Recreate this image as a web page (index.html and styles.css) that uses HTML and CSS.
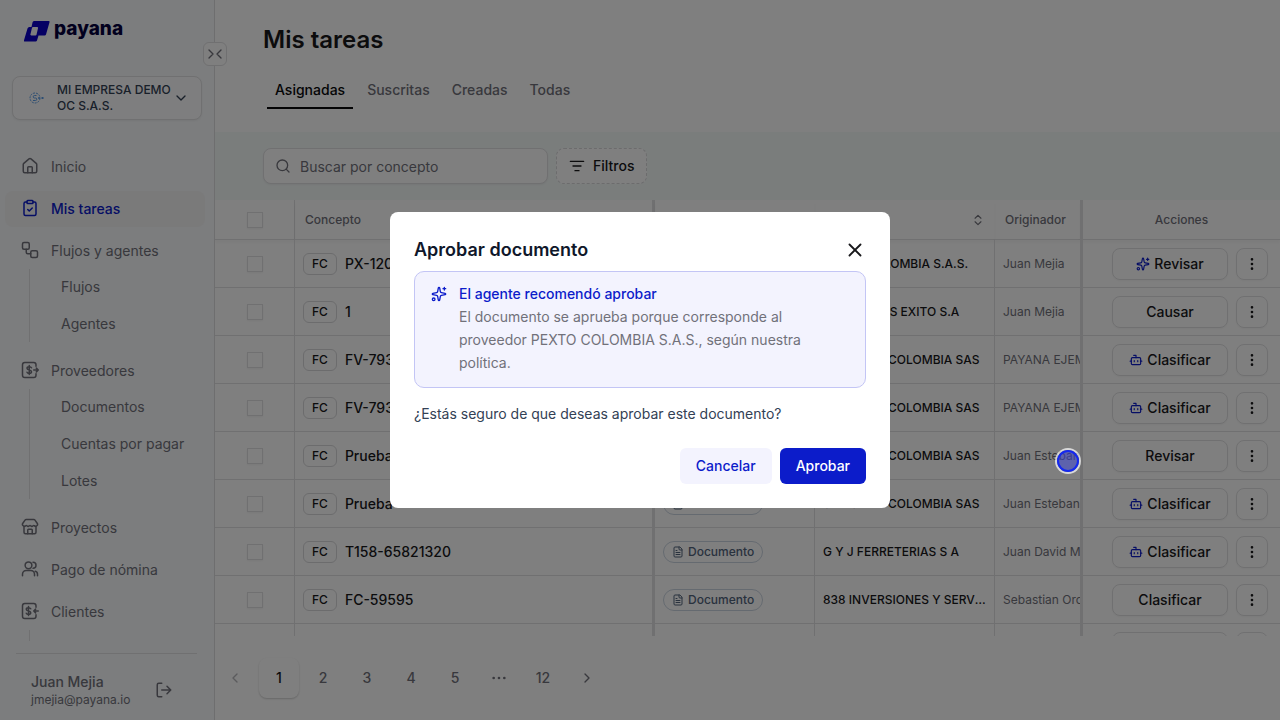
FILE: index.html
```html
<!DOCTYPE html>
<html lang="es">
<head>
  <meta charset="UTF-8" />
  <meta name="viewport" content="width=device-width, initial-scale=1.0" />
  <title>Mis tareas - Payana</title>
  <link rel="stylesheet" href="styles.css">
</head>
<body>

<!-- ===== Icons ===== -->
<svg class="sprite" aria-hidden="true">
  <symbol id="i-home" viewBox="0 0 24 24"><path d="M15 21v-7a1 1 0 0 0-1-1h-4a1 1 0 0 0-1 1v7"/><path d="M3 10a2 2 0 0 1 .7-1.5l7-6a2 2 0 0 1 2.6 0l7 6A2 2 0 0 1 21 10v9a2 2 0 0 1-2 2H5a2 2 0 0 1-2-2z"/></symbol>
  <symbol id="i-tasks" viewBox="0 0 24 24"><rect x="8" y="2" width="8" height="4" rx="1"/><path d="M16 4h2a2 2 0 0 1 2 2v14a2 2 0 0 1-2 2H6a2 2 0 0 1-2-2V6a2 2 0 0 1 2-2h2"/><path d="m9 14 2 2 4-4"/></symbol>
  <symbol id="i-flow" viewBox="0 0 24 24"><rect x="2" y="2" width="9" height="9" rx="2"/><path d="M7 11v4a2 2 0 0 0 2 2h4"/><rect x="13" y="13" width="9" height="9" rx="2"/></symbol>
  <symbol id="i-pay-out" viewBox="0 0 24 24"><path d="M20 7V5a3 3 0 0 0-3-3H5a3 3 0 0 0-3 3v14a3 3 0 0 0 3 3h12a3 3 0 0 0 3-3v-2"/><path d="M14 9c-.5-1-1.500-1.500-3-1.500-1.800 0-3 .8-3 2.200 0 3.200 6 1.400 6 4.600 0 1.400-1.200 2.200-3 2.200-1.500 0-2.500-.5-3-1.500M11 6v12"/><path d="M17 12h6M20.500 9.500 23 12l-2.500 2.500"/></symbol>
  <symbol id="i-pay-in" viewBox="0 0 24 24"><path d="M20 7V5a3 3 0 0 0-3-3H5a3 3 0 0 0-3 3v14a3 3 0 0 0 3 3h12a3 3 0 0 0 3-3v-2"/><path d="M13 9c-.5-1-1.500-1.500-3-1.500-1.800 0-3 .8-3 2.200 0 3.200 6 1.400 6 4.600 0 1.400-1.200 2.200-3 2.200-1.500 0-2.500-.5-3-1.500M10 6v12"/><path d="M23 12h-6M19.500 9.500 17 12l2.500 2.500"/></symbol>
  <symbol id="i-store" viewBox="0 0 24 24"><path d="M15 21v-5a1 1 0 0 0-1-1h-4a1 1 0 0 0-1 1v5"/><path d="M17.774 10.310a1.120 1.120 0 0 0-1.549 0 2.500 2.500 0 0 1-3.451 0 1.120 1.120 0 0 0-1.548 0 2.500 2.500 0 0 1-3.452 0 1.120 1.120 0 0 0-1.549 0 2.500 2.500 0 0 1-3.770-3.248l2.889-4.184A2 2 0 0 1 7 2h10a2 2 0 0 1 1.653.873l2.895 4.192a2.500 2.500 0 0 1-3.774 3.244"/><path d="M4 10.950V19a2 2 0 0 0 2 2h12a2 2 0 0 0 2-2v-8.050"/></symbol>
  <symbol id="i-users" viewBox="0 0 24 24"><circle cx="10" cy="7" r="4.500"/><path d="M2 21v-2a5 5 0 0 1 5-5h6a5 5 0 0 1 5 5v2M16 3a4 4 0 0 1 0 8M22 21v-2a4 4 0 0 0-3-3.870"/></symbol>
  <symbol id="i-logout" viewBox="0 0 24 24"><path d="m16 17 5-5-5-5M21 12H9M9 21H5a2 2 0 0 1-2-2V5a2 2 0 0 1 2-2h4"/></symbol>
  <symbol id="i-down" viewBox="0 0 24 24"><path d="m6 9 6 6 6-6"/></symbol>
  <symbol id="i-left" viewBox="0 0 24 24"><path d="m15 18-6-6 6-6"/></symbol>
  <symbol id="i-right" viewBox="0 0 24 24"><path d="m9 18 6-6-6-6"/></symbol>
  <symbol id="i-sort" viewBox="0 0 24 24"><path d="m7 15 5 5 5-5M7 9l5-5 5 5"/></symbol>
  <symbol id="i-collapse" viewBox="0 0 24 24"><path d="m3 18 6-6-6-6M21 6l-6 6 6 6"/></symbol>
  <symbol id="i-search" viewBox="0 0 24 24"><circle cx="11" cy="11" r="8"/><path d="m21 21-4.300-4.300"/></symbol>
  <symbol id="i-filter" viewBox="0 0 24 24"><path d="M2 5h20M6 12h12M9 19h6"/></symbol>
  <symbol id="i-doc" viewBox="0 0 24 24"><path d="M15 2H6a2 2 0 0 0-2 2v16a2 2 0 0 0 2 2h12a2 2 0 0 0 2-2V7z"/><path d="M14 2v4a2 2 0 0 0 2 2h4M10 9H8M16 13H8M16 17H8"/></symbol>
  <symbol id="i-bot" viewBox="0 0 24 24"><path d="M12 8V4H8"/><rect x="4" y="8" width="16" height="12" rx="2"/><path d="M2 14h2M20 14h2M15 13v2M9 13v2"/></symbol>
  <symbol id="i-spark" viewBox="0 0 24 24"><path d="M11.017 2.814a1 1 0 0 1 1.966 0l1.051 5.558a2 2 0 0 0 1.594 1.594l5.558 1.051a1 1 0 0 1 0 1.966l-5.558 1.051a2 2 0 0 0-1.594 1.594l-1.051 5.558a1 1 0 0 1-1.966 0l-1.051-5.558a2 2 0 0 0-1.594-1.594l-5.558-1.051a1 1 0 0 1 0-1.966l5.558-1.051a2 2 0 0 0 1.594-1.594z"/><path d="M20 2v4M22 4h-4"/><circle cx="4" cy="20" r="2"/></symbol>
  <symbol id="i-more" viewBox="0 0 24 24"><circle cx="12" cy="5" r="1"/><circle cx="12" cy="12" r="1"/><circle cx="12" cy="19" r="1"/></symbol>
  <symbol id="i-dots" viewBox="0 0 24 24"><circle cx="4" cy="12" r="1"/><circle cx="12" cy="12" r="1"/><circle cx="20" cy="12" r="1"/></symbol>
  <symbol id="i-close" viewBox="0 0 24 24"><path d="M18 6 6 18M6 6l12 12"/></symbol>
</svg>

<div class="app">

  <!-- ===== Sidebar ===== -->
  <aside class="sidebar">
    <a class="brand" href="#">
      <svg class="brand-mark" viewBox="0 0 26 21" aria-hidden="true">
        <path fill="#0a00c8" fill-rule="evenodd" d="M10 0H24.500a1 1 0 0 1 1 1.300L22 13.500a1.500 1.500 0 0 1-1.500 1H14.500L13 19.500a1.500 1.500 0 0 1-1.500 1H1a1 1 0 0 1-1-1.300L3.500 7.500A2 2 0 0 1 5.500 6H7.500L8.500 1.500A2 2 0 0 1 10 0zM9 6a1 1 0 0 0-1 .7L6.500 13a1 1 0 0 0 1 1.500H11.500a1 1 0 0 0 1-.8L14 7.300A1 1 0 0 0 13 6z"/>
      </svg>
      <span>payana</span>
    </a>
    <button class="collapse" aria-label="Contraer menú"><svg class="icon"><use href="#i-collapse"/></svg></button>

    <button class="company">
      <svg class="company-logo" viewBox="0 0 16 12" aria-hidden="true">
        <circle cx="6" cy="6" r="5" stroke-dasharray="2 1"/><path d="M7.500 3.500H5.500a1.200 1.200 0 0 0 0 2.500h1a1.200 1.200 0 0 1 0 2.500H4M9 6h2M12 6h3M10 5v2M13.500 5v2"/>
      </svg>
      <span>MI EMPRESA DEMO OC S.A.S.</span>
      <svg class="icon"><use href="#i-down"/></svg>
    </button>

    <nav class="nav">
      <a class="nav-link" href="#"><svg class="icon"><use href="#i-home"/></svg>Inicio</a>
      <a class="nav-link active" href="#"><svg class="icon"><use href="#i-tasks"/></svg>Mis tareas</a>
      <div class="nav-group">
        <a class="nav-link" href="#"><svg class="icon"><use href="#i-flow"/></svg>Flujos y agentes</a>
        <div class="subnav">
          <a href="#">Flujos</a>
          <a href="#">Agentes</a>
        </div>
      </div>
      <div class="nav-group">
        <a class="nav-link" href="#"><svg class="icon"><use href="#i-pay-out"/></svg>Proveedores</a>
        <div class="subnav">
          <a href="#">Documentos</a>
          <a href="#">Cuentas por pagar</a>
          <a href="#">Lotes</a>
        </div>
      </div>
      <a class="nav-link" href="#"><svg class="icon"><use href="#i-store"/></svg>Proyectos</a>
      <a class="nav-link" href="#"><svg class="icon"><use href="#i-users"/></svg>Pago de nómina</a>
      <div class="nav-group">
        <a class="nav-link" href="#"><svg class="icon"><use href="#i-pay-in"/></svg>Clientes</a>
        <div class="subnav"><a href="#"></a></div>
      </div>
    </nav>

    <div class="user">
      <div>
        <div class="user-name">Juan Mejia</div>
        <div class="user-mail">jmejia@payana.io</div>
      </div>
      <button class="logout" aria-label="Cerrar sesión"><svg class="icon"><use href="#i-logout"/></svg></button>
    </div>
  </aside>

  <!-- ===== Main ===== -->
  <main class="main">
    <header class="page-head">
      <h1>Mis tareas</h1>
      <div class="tabs">
        <button class="tab active">Asignadas</button>
        <button class="tab">Suscritas</button>
        <button class="tab">Creadas</button>
        <button class="tab">Todas</button>
      </div>
    </header>

    <div class="toolbar">
      <label class="search">
        <svg class="icon"><use href="#i-search"/></svg>
        <input type="text" placeholder="Buscar por concepto" aria-label="Buscar por concepto">
      </label>
      <button class="filters"><svg class="icon"><use href="#i-filter"/></svg>Filtros</button>
    </div>

    <div class="table-wrap">
      <table>
        <colgroup><col class="c-check"><col class="c-concept"><col class="c-type"><col class="c-vendor"><col><col class="c-actions"></colgroup>
        <thead>
          <tr>
            <th class="check"><input type="checkbox" aria-label="Seleccionar todo"></th>
            <th class="concept">Concepto</th>
            <th>Tipo</th>
            <th><div class="sortable">Proveedor<svg class="icon"><use href="#i-sort"/></svg></div></th>
            <th>Originador</th>
            <th class="actions">Acciones</th>
          </tr>
        </thead>
        <tbody>
          <tr>
            <td class="check"><input type="checkbox" aria-label="Seleccionar PX-1203"></td>
            <td class="concept"><div class="doc"><span class="tag">FC</span>PX-1203</div></td>
            <td><span class="pill"><svg class="icon"><use href="#i-doc"/></svg>Documento</span></td>
            <td class="vendor">PEXTO COLOMBIA S.A.S.</td>
            <td class="owner">Juan Mejia</td>
            <td class="actions"><div class="action-row"><button class="act"><svg class="icon"><use href="#i-spark"/></svg>Revisar</button><button class="more" aria-label="Más"><svg class="icon"><use href="#i-more"/></svg></button></div></td>
          </tr>
          <tr>
            <td class="check"><input type="checkbox" aria-label="Seleccionar 1"></td>
            <td class="concept"><div class="doc"><span class="tag">FC</span>1</div></td>
            <td><span class="pill"><svg class="icon"><use href="#i-doc"/></svg>Documento</span></td>
            <td class="vendor">ALMACENES EXITO S.A</td>
            <td class="owner">Juan Mejia</td>
            <td class="actions"><div class="action-row"><button class="act">Causar</button><button class="more" aria-label="Más"><svg class="icon"><use href="#i-more"/></svg></button></div></td>
          </tr>
          <tr>
            <td class="check"><input type="checkbox" aria-label="Seleccionar FV-793"></td>
            <td class="concept"><div class="doc"><span class="tag">FC</span>FV-793</div></td>
            <td><span class="pill"><svg class="icon"><use href="#i-doc"/></svg>Documento</span></td>
            <td class="vendor">SAMSUNG COLOMBIA SAS</td>
            <td class="owner">PAYANA EJEMPLO</td>
            <td class="actions"><div class="action-row"><button class="act"><svg class="icon"><use href="#i-bot"/></svg>Clasificar</button><button class="more" aria-label="Más"><svg class="icon"><use href="#i-more"/></svg></button></div></td>
          </tr>
          <tr>
            <td class="check"><input type="checkbox" aria-label="Seleccionar FV-793"></td>
            <td class="concept"><div class="doc"><span class="tag">FC</span>FV-793</div></td>
            <td><span class="pill"><svg class="icon"><use href="#i-doc"/></svg>Documento</span></td>
            <td class="vendor">SAMSUNG COLOMBIA SAS</td>
            <td class="owner">PAYANA EJEMPLO</td>
            <td class="actions"><div class="action-row"><button class="act"><svg class="icon"><use href="#i-bot"/></svg>Clasificar</button><button class="more" aria-label="Más"><svg class="icon"><use href="#i-more"/></svg></button></div></td>
          </tr>
          <tr>
            <td class="check"><input type="checkbox" aria-label="Seleccionar Prueba"></td>
            <td class="concept"><div class="doc"><span class="tag">FC</span>Prueba</div></td>
            <td><span class="pill"><svg class="icon"><use href="#i-doc"/></svg>Documento</span></td>
            <td class="vendor">SAMSUNG COLOMBIA SAS</td>
            <td class="owner">Juan Esteban</td>
            <td class="actions"><div class="action-row"><button class="act">Revisar</button><button class="more" aria-label="Más"><svg class="icon"><use href="#i-more"/></svg></button></div></td>
          </tr>
          <tr>
            <td class="check"><input type="checkbox" aria-label="Seleccionar Prueba"></td>
            <td class="concept"><div class="doc"><span class="tag">FC</span>Prueba</div></td>
            <td><span class="pill"><svg class="icon"><use href="#i-doc"/></svg>Documento</span></td>
            <td class="vendor">SAMSUNG COLOMBIA SAS</td>
            <td class="owner">Juan Esteban</td>
            <td class="actions"><div class="action-row"><button class="act"><svg class="icon"><use href="#i-bot"/></svg>Clasificar</button><button class="more" aria-label="Más"><svg class="icon"><use href="#i-more"/></svg></button></div></td>
          </tr>
          <tr>
            <td class="check"><input type="checkbox" aria-label="Seleccionar T158-65821320"></td>
            <td class="concept"><div class="doc"><span class="tag">FC</span>T158-65821320</div></td>
            <td><span class="pill"><svg class="icon"><use href="#i-doc"/></svg>Documento</span></td>
            <td class="vendor">G Y J FERRETERIAS S A</td>
            <td class="owner">Juan David Mejia</td>
            <td class="actions"><div class="action-row"><button class="act"><svg class="icon"><use href="#i-bot"/></svg>Clasificar</button><button class="more" aria-label="Más"><svg class="icon"><use href="#i-more"/></svg></button></div></td>
          </tr>
          <tr>
            <td class="check"><input type="checkbox" aria-label="Seleccionar FC-59595"></td>
            <td class="concept"><div class="doc"><span class="tag">FC</span>FC-59595</div></td>
            <td><span class="pill"><svg class="icon"><use href="#i-doc"/></svg>Documento</span></td>
            <td class="vendor">838 INVERSIONES Y SERVICIOS SAS</td>
            <td class="owner">Sebastian Orozco</td>
            <td class="actions"><div class="action-row"><button class="act">Clasificar</button><button class="more" aria-label="Más"><svg class="icon"><use href="#i-more"/></svg></button></div></td>
          </tr>
          <tr>
            <td class="check"></td>
            <td class="concept"></td>
            <td></td>
            <td class="vendor"></td>
            <td class="owner"></td>
            <td class="actions"><div class="action-row"><button class="act">Clasificar</button><button class="more" aria-label="Más"><svg class="icon"><use href="#i-more"/></svg></button></div></td>
          </tr>
        </tbody>
      </table>
    </div>

    <nav class="pages" aria-label="Paginación">
      <button class="prev" aria-label="Anterior"><svg class="icon"><use href="#i-left"/></svg></button>
      <button class="current">1</button>
      <button>2</button>
      <button>3</button>
      <button>4</button>
      <button>5</button>
      <button aria-label="Más páginas"><svg class="icon"><use href="#i-dots"/></svg></button>
      <button>12</button>
      <button aria-label="Siguiente"><svg class="icon"><use href="#i-right"/></svg></button>
    </nav>
  </main>
</div>

<!-- ===== Approve modal ===== -->
<div class="overlay">
  <div class="modal" role="dialog" aria-modal="true" aria-labelledby="modalTitle">
    <div class="modal-head">
      <h2 id="modalTitle">Aprobar documento</h2>
      <button class="close" aria-label="Cerrar"><svg class="icon"><use href="#i-close"/></svg></button>
    </div>
    <div class="advice">
      <svg class="icon"><use href="#i-spark"/></svg>
      <div>
        <h3>El agente recomendó aprobar</h3>
        <p>El documento se aprueba porque corresponde al proveedor PEXTO COLOMBIA S.A.S., según nuestra política.</p>
      </div>
    </div>
    <p class="question">¿Estás seguro de que deseas aprobar este documento?</p>
    <div class="modal-actions">
      <button class="btn cancel">Cancelar</button>
      <button class="btn approve">Aprobar</button>
    </div>
  </div>
</div>

<div class="pointer"></div>

</body>
</html>
```
FILE: styles.css
```css
:root { --blue:#0c1cca; --line:#e0e0e2; --muted:#71717a; --ink:#18181b; }
* { box-sizing:border-box; margin:0; padding:0; }
body { font-family:Inter,"Liberation Sans",sans-serif; font-size:14px; line-height:20px; color:var(--ink); background:#fff; overflow:hidden; }
button,input { font:inherit; color:inherit; }
button { background:none; border:none; cursor:pointer; }
a { color:inherit; text-decoration:none; }

.sprite{display:none;}
.icon{
  width:16px;height:16px;flex:none;fill:none;stroke:currentColor;
  stroke-width:2;stroke-linecap:round;stroke-linejoin:round;
}

.app{display:flex;height:100vh;}

/* ===== Sidebar ===== */
.sidebar{
  position:relative;width:215px;flex:none;display:flex;flex-direction:column;
  background:#f8fafc;border-right:1px solid #dcdcde;
}
.brand{
  display:flex;align-items:center;gap:4px;height:42px;margin-bottom:34px;padding:20px 0 0 24px;
  font-size:19px;line-height:20px;font-weight:800;color:#05003c;
}
.brand-mark{width:26px;height:21px;}
.brand span{padding-bottom:4px;}
.collapse{
  position:absolute;top:42px;right:-13px;width:24px;height:24px;z-index:2;
  display:flex;align-items:center;justify-content:center;
  background:#fff;border:1px solid var(--line);border-radius:6px;color:var(--muted);
}
.company{
  display:flex;align-items:center;min-height:44px;margin:0 12px 29px;padding:0 12px 0 16px;
  background:#fdfdfe;border:1px solid var(--line);border-radius:8px;
  box-shadow:0 1px 2px rgba(0,0,0,.05);color:#334155;
}
.company span{flex:1;padding-left:12px;text-align:left;font-size:12px;line-height:16px;font-weight:500;}
.company-logo{width:16px;height:12px;fill:none;stroke:#5b9ce6;stroke-width:1;}

.nav{flex:1;display:flex;flex-direction:column;gap:6px;min-height:0;overflow:hidden;padding:0 9px 0 5px;color:var(--muted);}
.nav-link{display:flex;align-items:center;flex:none;gap:12px;height:36px;padding-left:16px;border-radius:8px;}
.nav-link .icon{width:18px;height:18px;margin-bottom:2px;}
.nav-link.active{background:#f4f4f5;color:var(--blue);font-weight:500;}
.nav-group{flex:none;}
.subnav{
  display:flex;flex-direction:column;gap:1px;margin:0 0 5px 24px;
  padding-left:31px;border-left:1px solid var(--line);
}
.subnav a{height:36px;line-height:36px;}

.user{
  display:flex;align-items:center;justify-content:space-between;margin:12px 17px 0 16px;
  padding:18px 24px 12px 15px;border-top:1px solid var(--line);color:var(--muted);
}
.user-name{font-weight:500;}
.user-mail{font-size:12px;line-height:16px;}
.logout{display:flex;}
.logout .icon{width:18px;height:18px;}

/* ===== Page head ===== */
.main{flex:1;min-width:0;display:flex;flex-direction:column;}
.page-head{padding:24px 48px;height:132px;}
.page-head h1{font-size:24px;line-height:32px;font-weight:600;}
.tabs{display:flex;gap:6px;padding:16px 4px 0;}
.tab{height:37px;padding:0 8px;border-bottom:2px solid transparent;color:var(--muted);font-weight:500;}
.tab.active{color:#09090b;border-color:#09090b;}

.toolbar{display:flex;gap:8px;padding:16px 48px;background:#f5faf9;}
.search{
  display:flex;align-items:center;gap:9px;width:285px;height:36px;padding:0 11px;
  background:#fff;border:1px solid var(--line);border-radius:8px;color:var(--muted);
  box-shadow:0 1px 2px rgba(0,0,0,.05);
}
.search input{flex:1;min-width:0;padding-top:2px;border:none;outline:none;background:none;}
.search input::placeholder{color:var(--muted);opacity:1;}
.filters{
  display:flex;align-items:center;gap:8px;height:36px;padding:0 12px;
  background:#fff;border:1px dashed #d8d8da;border-radius:8px;font-weight:500;
}

/* ===== Table ===== */
.table-wrap{flex:1;min-height:0;overflow:hidden;}
table{width:100%;table-layout:fixed;border-collapse:separate;border-spacing:0;}
.c-check{width:80px;}
.c-concept{width:360px;}
.c-type{width:160px;}
.c-vendor{width:180px;}
.c-actions{width:200px;}
th{
  height:40px;padding:0 10px;text-align:left;font-size:12px;font-weight:500;color:var(--muted);
  border-bottom:1px solid var(--line);box-shadow:0 3px 3px rgba(0,0,0,.03);
}
td{
  height:48px;padding:0 8px;overflow:hidden;white-space:nowrap;
  border-bottom:1px solid var(--line);border-right:1px solid var(--line);
}
.check{border-right:1px solid var(--line);}
.concept{border-right:3px solid var(--line);font-weight:500;}
.check input{
  appearance:none;display:block;width:16px;height:16px;margin:0 auto;
  border:1px solid var(--line);box-shadow:0 1px 2px rgba(0,0,0,.05);
}
.sortable{display:flex;align-items:center;justify-content:space-between;}
.sortable .icon{width:14px;height:14px;}
.doc{display:flex;align-items:center;gap:8px;}
.tag{
  padding:0 8px;border:1px solid #d8d8da;
  border-radius:6px;font-size:12px;line-height:20px;font-weight:500;
}
.pill{
  display:inline-flex;align-items:center;gap:4px;padding:0 8px;vertical-align:middle;
  border:1px solid #cbd5e1;border-radius:12px;font-size:12px;line-height:20px;font-weight:500;color:#52647c;
}
.pill .icon{width:12px;height:12px;}
.vendor{font-size:12px;font-weight:500;text-overflow:ellipsis;}
.owner{font-size:12px;color:var(--muted);border-right:none;}
.actions{border-left:3px solid var(--line);border-right:none;}
th.actions{text-align:center;}
td.actions{padding:0 12px;}
.action-row{display:flex;justify-content:flex-end;gap:8px;}
.act,.more{
  display:flex;align-items:center;justify-content:center;gap:4px;height:32px;
  border:1px solid var(--line);border-radius:8px;font-weight:500;box-shadow:0 1px 2px rgba(0,0,0,.04);
}
.act{width:116px;}
.act .icon{width:14px;height:14px;color:var(--blue);}
.more{width:32px;}

/* ===== Pagination ===== */
.pages{display:flex;gap:4px;padding:22px 0;color:var(--muted);}
.pages button{display:flex;align-items:center;justify-content:center;width:40px;height:40px;border-radius:8px;font-weight:500;}
.pages .current{color:var(--ink);box-shadow:0 1px 2px rgba(0,0,0,.2);}
.pages .prev{opacity:.5;}

/* ===== Modal ===== */
.overlay{
  position:fixed;inset:0;z-index:50;display:flex;align-items:center;justify-content:center;
  background:rgba(0,0,0,.5);
}
.modal{width:90%;max-width:500px;padding:24px;background:#fff;border-radius:8px;}
.modal-head{display:flex;align-items:center;justify-content:space-between;height:27px;margin-bottom:8px;}
.modal-head h2{font-size:18px;font-weight:600;color:#0f172a;}
.close{display:flex;}
.close .icon{width:22px;height:22px;}
.advice{
  display:flex;gap:12px;padding:10px 16px 13px;line-height:23px;
  background:#f3f3fe;border:1px solid #c3c5f5;border-radius:10px;color:var(--muted);
}
.advice .icon{margin-top:4px;color:var(--blue);}
.advice h3{font-size:14px;font-weight:500;color:var(--blue);}
.question{margin:16px 0 24px;color:#334155;}
.modal-actions{display:flex;justify-content:flex-end;gap:8px;}
.btn{height:36px;padding:0 16px;border-radius:6px;font-weight:500;}
.cancel{background:#f3f3fe;color:var(--blue);}
.approve{background:var(--blue);color:#fff;}

/* click marker floating over the page */
.pointer{
  position:absolute;left:1057px;top:450px;width:22px;height:22px;z-index:60;border-radius:50%;
  background:rgba(60,70,220,.5);border:2px solid #1428f0;box-shadow:0 0 0 2px rgba(255,255,255,.7);
}
```
